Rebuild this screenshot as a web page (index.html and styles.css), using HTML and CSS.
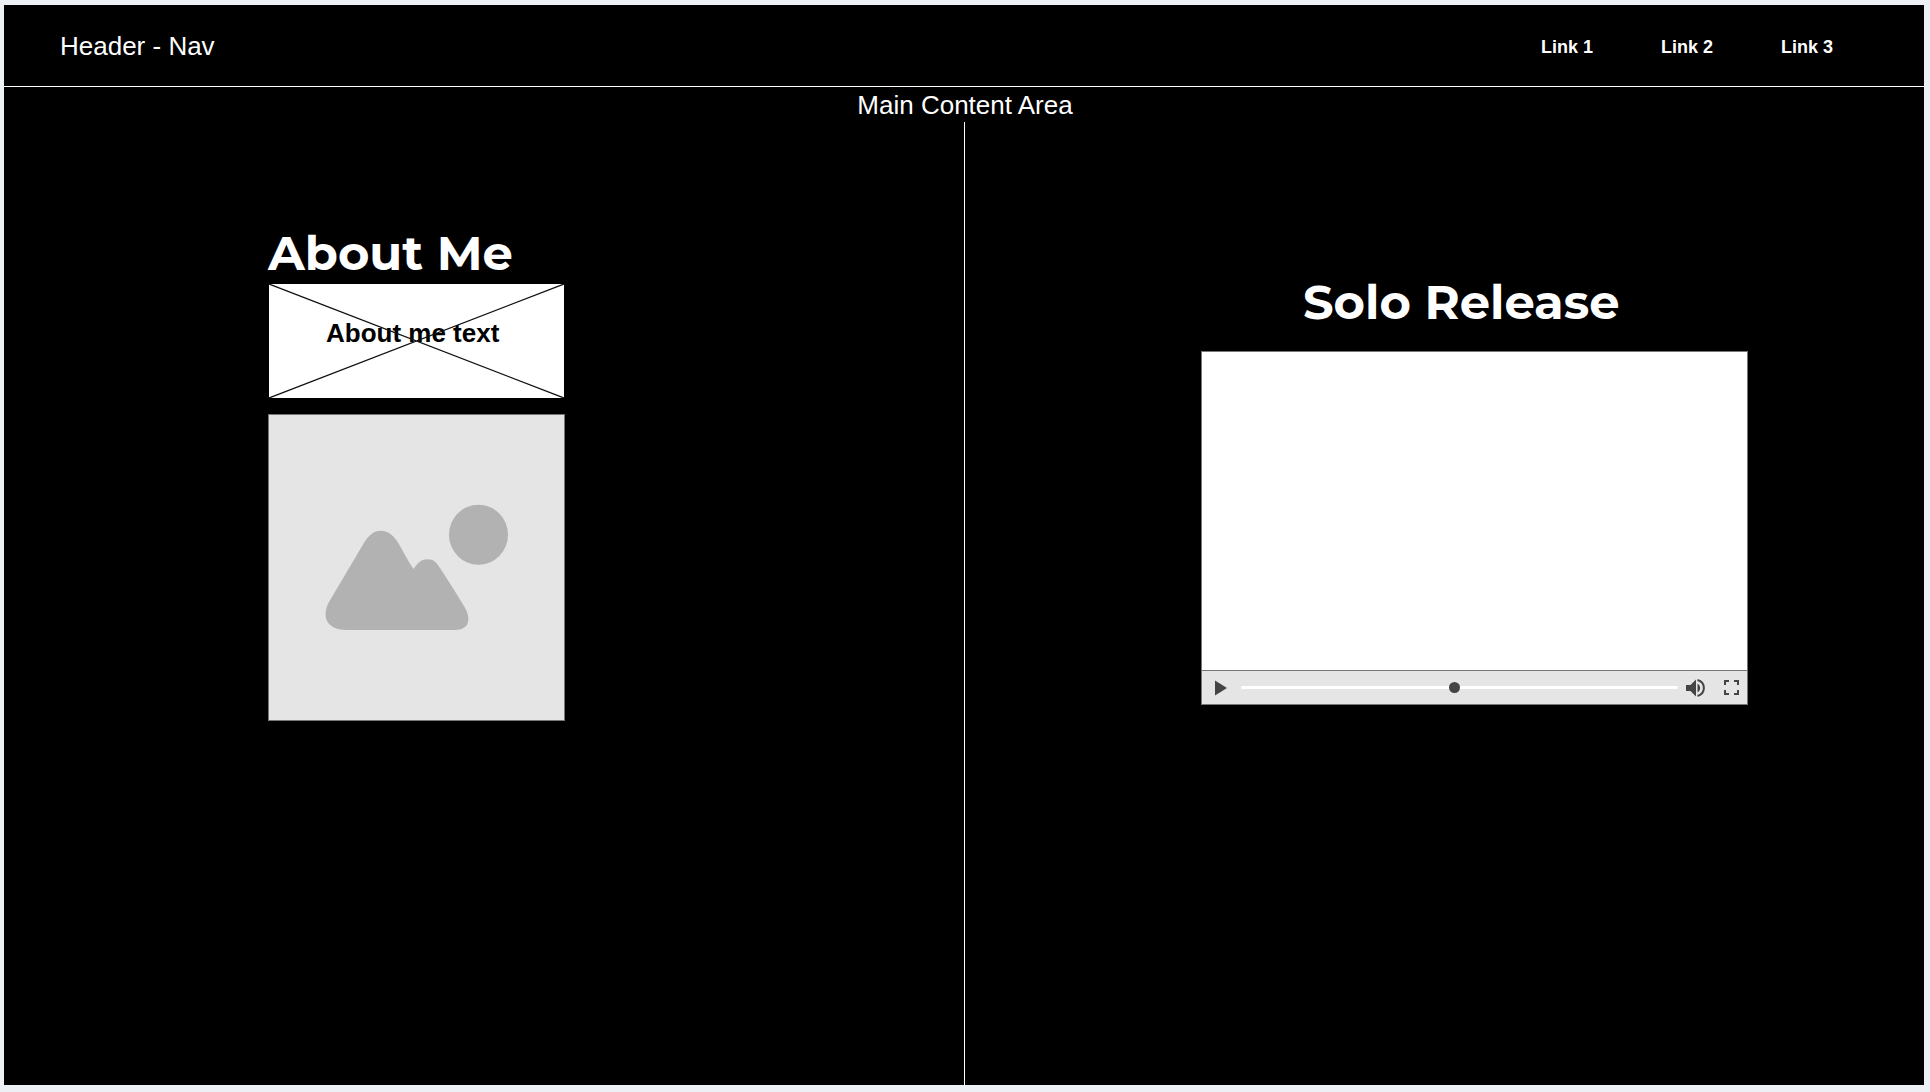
FILE: index.html
```html
<!DOCTYPE html>
<html lang="en">
<head>
  <meta charset="utf-8">
  <meta name="viewport" content="width=device-width, initial-scale=1">
  <title>Header - Nav</title>
  <link rel="stylesheet" href="styles.css">
</head>
<body>
  <div class="page">
    <header class="header">
      <div class="brand">Header - Nav</div>
      <nav class="nav">
        <a href="#link-1">Link 1</a>
        <a href="#link-2">Link 2</a>
        <a href="#link-3">Link 3</a>
      </nav>
    </header>
    <main class="main">
      <h1 class="main-title">Main Content Area</h1>
      <div class="columns">
        <section class="about">
          <h2 class="heading">About Me</h2>
          <div class="about-text">
            <svg class="cross" viewBox="0 0 295 114" preserveAspectRatio="none" aria-hidden="true">
              <path d="M0 0L295 114M0 114L295 0" stroke="#111" stroke-width="1.3" fill="none"/>
            </svg>
            <p class="about-label">About me text</p>
          </div>
          <svg class="picture" viewBox="0 0 295 305" role="img" aria-label="Picture placeholder">
            <ellipse cx="209.500" cy="119.700" rx="29.500" ry="30" fill="#b2b2b2"/>
            <path d="M95.500 127C101 118.500 106 115.700 112 115.700S123.500 119 129 127.500C134 136 139 146 144.500 154C149 147.500 152.500 144.300 158.500 144.300S167.500 147.500 171 153C179 165.500 188 179 195.500 192C202.500 204 200.500 215 186 215H78C58 215 52 202 60 187Z" fill="#b2b2b2"/>
          </svg>
        </section>
        <section class="release">
          <h2 class="heading release-heading">Solo Release</h2>
          <div class="player">
            <div class="screen"></div>
            <div class="controls">
              <button class="icon-button" type="button" aria-label="Play">
                <svg width="12" height="16" viewBox="0 0 12 16"><path d="M0 .5L12 8L0 15.500Z" fill="#444"/></svg>
              </button>
              <input class="seek" type="range" min="0" max="1000" value="488" aria-label="Seek">
              <button class="icon-button" type="button" aria-label="Volume">
                <svg width="20" height="20" viewBox="0 0 20 20">
                  <path d="M0 7V13H4.500L10 18.500V1.500L4.500 7Z" fill="#444"/>
                  <path d="M11.500 5.500C15 7.500 15 12.500 11.500 14.500Z" fill="#444"/>
                  <path d="M11.500 2C20 4.500 20 15.500 11.500 18" fill="none" stroke="#444" stroke-width="2"/>
                </svg>
              </button>
              <button class="icon-button" type="button" aria-label="Full screen">
                <svg width="15" height="15" viewBox="0 0 15 15"><path d="M1 5V1H5M10 1H14V5M14 10V14H10M5 14H1V10" fill="none" stroke="#444" stroke-width="2"/></svg>
              </button>
            </div>
          </div>
        </section>
      </div>
    </main>
  </div>
</body>
</html>
```
FILE: styles.css
```css
* {
  box-sizing: border-box;
}

body {
  display: flex;
  min-height: 100vh;
  margin: 0;
  padding: 5px 6px 7px 4px;
  background: #edf1f6;
  color: #fff;
  font-family: "Liberation Sans", Arial, sans-serif;
}

h1,
h2,
p {
  margin: 0;
}

.page {
  display: flex;
  flex: 1;
  flex-direction: column;
  background: #000;
}

.header {
  display: flex;
  align-items: center;
  justify-content: space-between;
  padding: 25px 91px 23px 56px;
  border-bottom: 1px solid #fff;
}

.brand {
  font-size: 26px;
  line-height: 33px;
}

.nav {
  display: flex;
  gap: 68px;
}

.nav a {
  color: #fff;
  font-size: 18px;
  font-weight: bold;
  line-height: 24px;
  text-decoration: none;
}

.main {
  display: flex;
  flex: 1;
  flex-direction: column;
}

.main-title {
  padding: 2px 0 0 2px;
  font-size: 26px;
  font-weight: normal;
  line-height: 33px;
  text-align: center;
}

.columns {
  display: grid;
  flex: 1;
  grid-template-columns: 1fr 1fr;
}

.about {
  padding: 101px 0 0 264px;
}

.heading {
  margin-bottom: 1px;
  font-family: Montserrat, Inter, sans-serif;
  font-size: 48px;
  font-weight: bold;
  line-height: 60px;
}

.about-text {
  position: relative;
  width: 297px;
  height: 114px;
  margin-bottom: 16px;
  padding: 32px 0 0 57px;
  border: solid #000;
  border-width: 0 1px;
  background: #fff;
  color: #000;
}

.cross {
  position: absolute;
  inset: 0;
  width: 100%;
  height: 100%;
}

.about-label {
  font-size: 26px;
  font-weight: bold;
  line-height: 34px;
  white-space: nowrap;
}

.picture {
  display: block;
  width: 297px;
  height: 307px;
  border: 1px solid #777;
  background: #e5e5e5;
}

.release {
  padding: 150px 176px 0 236px;
  border-left: 1px solid #fff;
}

.release-heading {
  margin-bottom: 19px;
  padding-left: 102px;
}

.player {
  border: 1px solid #777;
  background: #fff;
}

.screen {
  height: 318px;
}

.controls {
  display: flex;
  align-items: center;
  height: 34px;
  padding: 0 8px 0 13px;
  border-top: 1px solid #777;
  background: #e5e5e5;
}

.icon-button {
  display: flex;
  flex: none;
  padding: 0;
  border: 0;
  background: none;
}

.icon-button + .icon-button {
  margin-left: 18px;
}

.seek {
  flex: 1;
  min-width: 0;
  height: 11px;
  margin: 0 8px 0 14px;
  appearance: none;
  background: none;
}

.seek::-webkit-slider-runnable-track {
  height: 3px;
  border-radius: 2px;
  background: #fff;
}

.seek::-webkit-slider-thumb {
  width: 11px;
  height: 11px;
  margin-top: -4px;
  appearance: none;
  border-radius: 50%;
  background: #444;
}
```
